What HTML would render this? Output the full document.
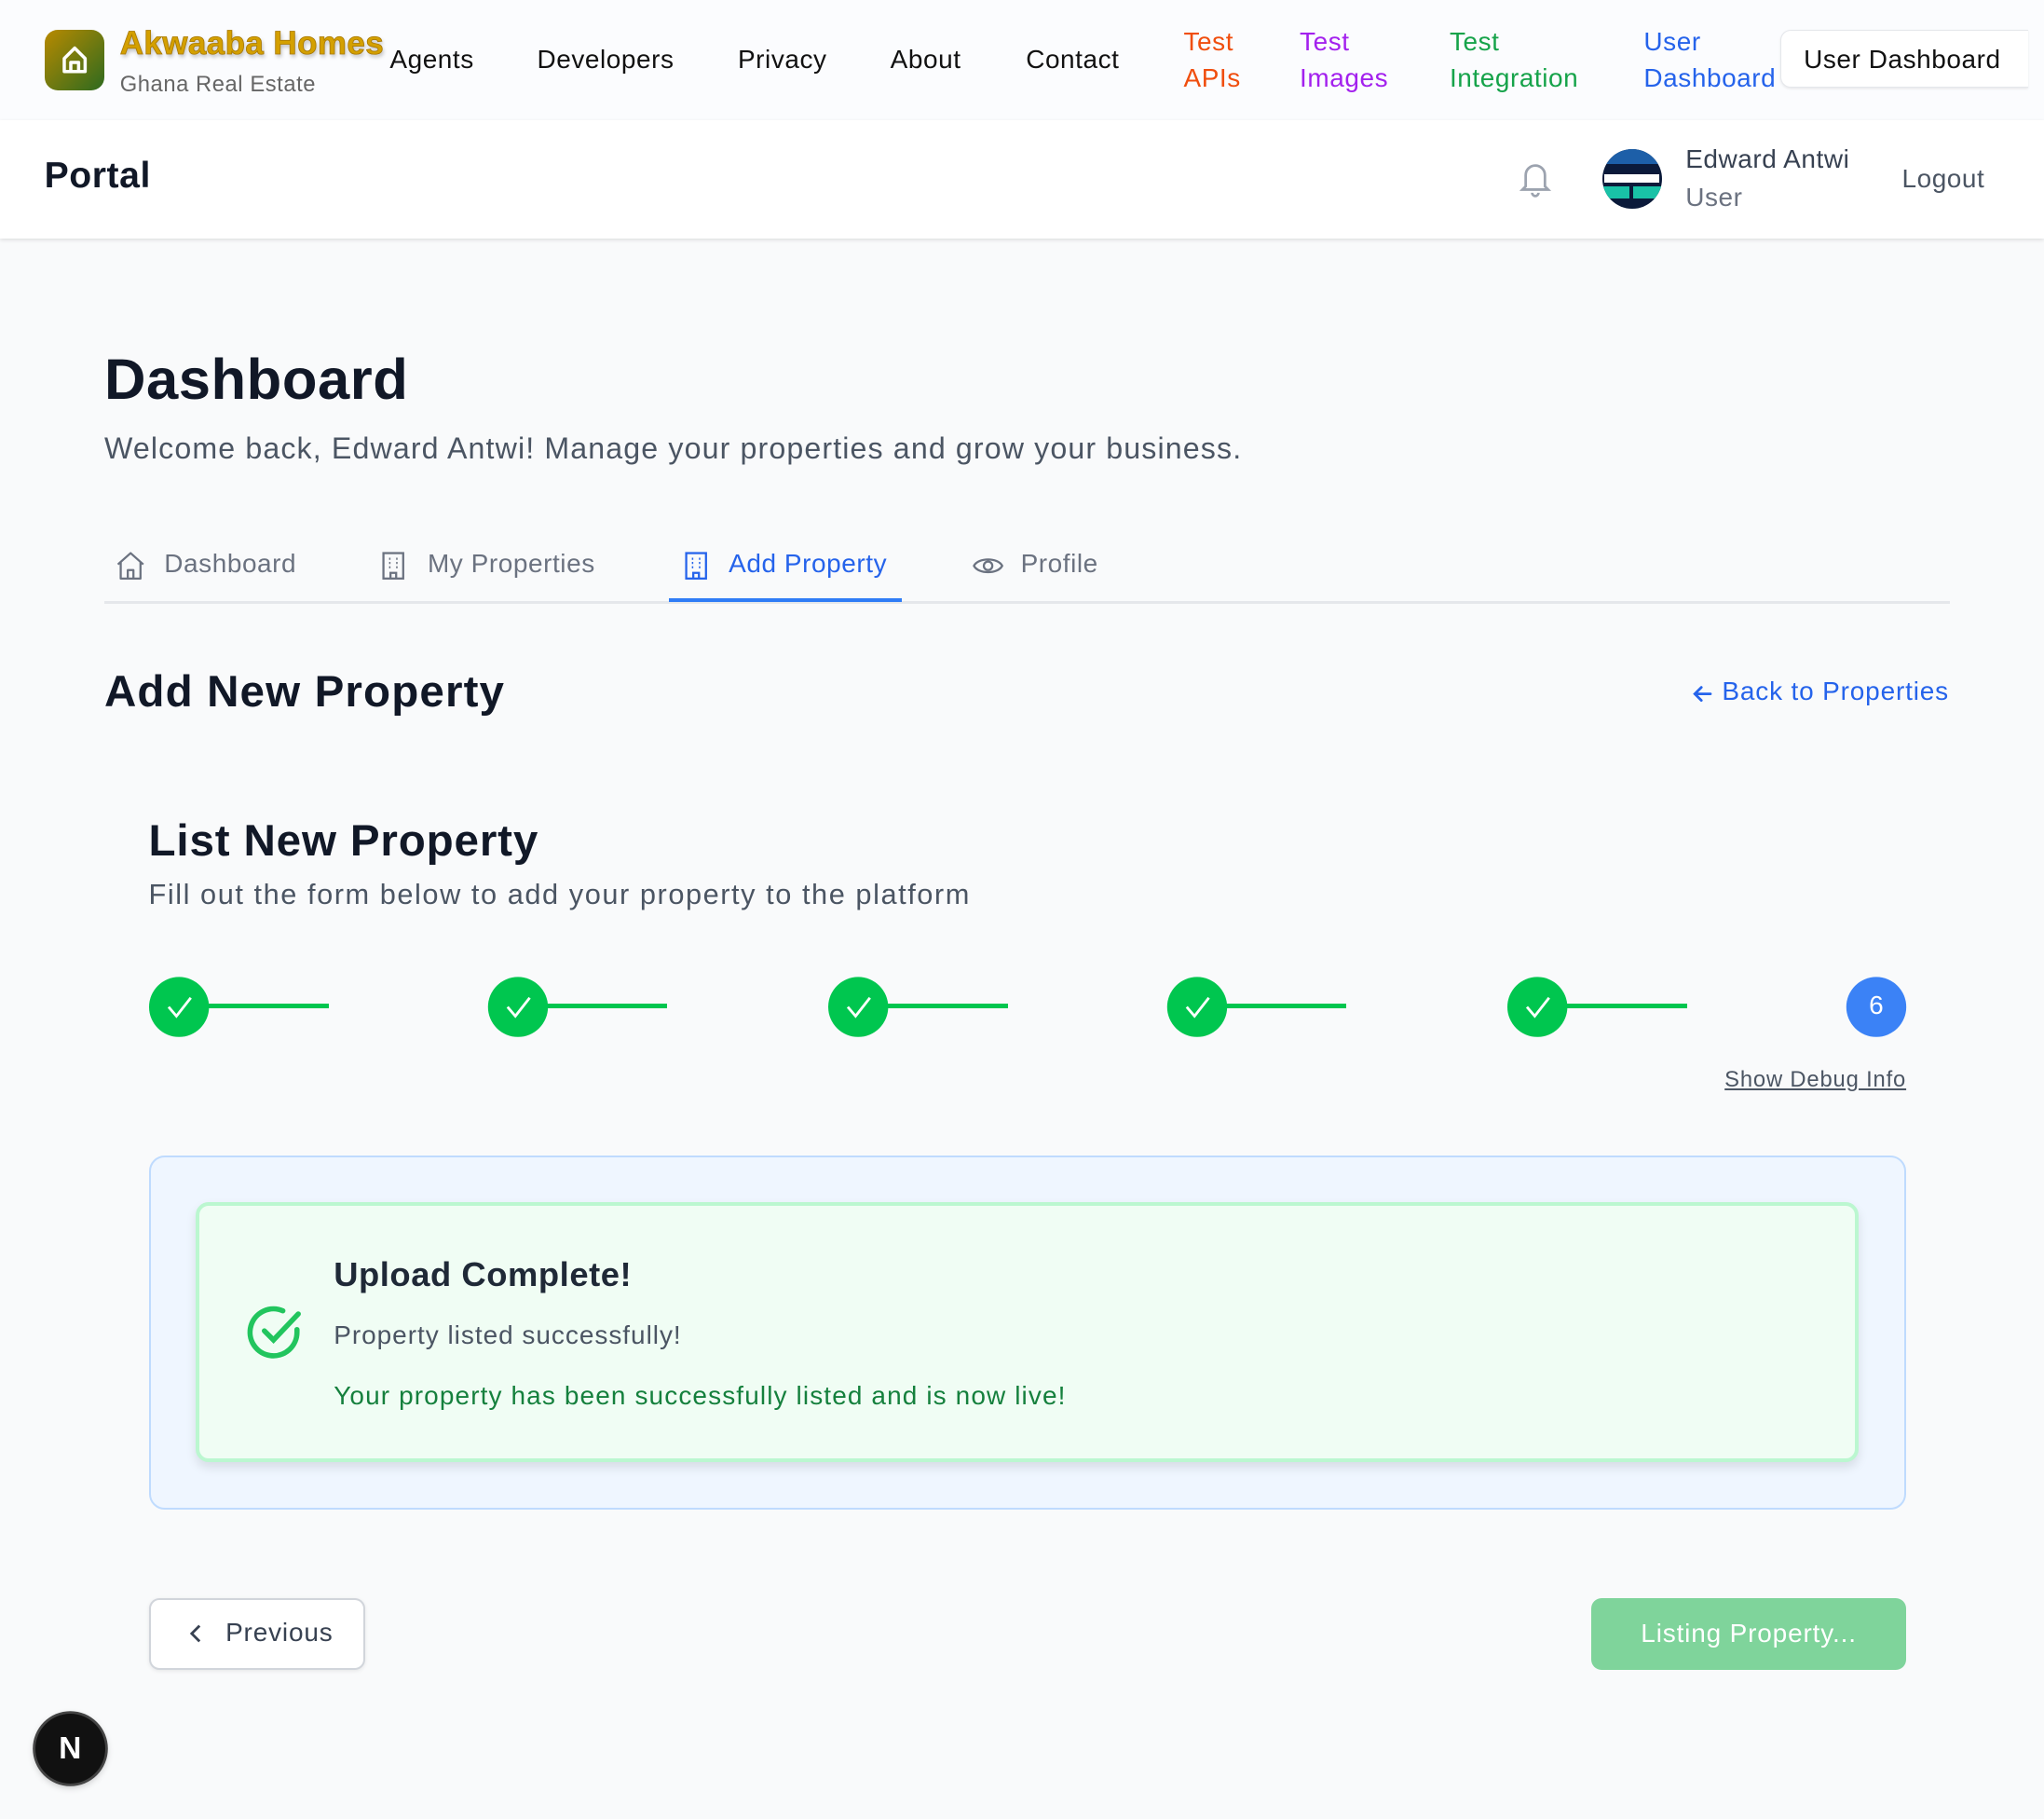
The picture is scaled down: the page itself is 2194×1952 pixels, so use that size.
<!DOCTYPE html>
<html><head><meta charset="utf-8"><style>
html,body{margin:0;padding:0}
body{width:1568px;height:1395px;zoom:1.39923;background:#f9fafb;font-family:"Liberation Sans",Arial,sans-serif;position:relative;overflow:hidden;color:#111827;letter-spacing:0.4px}
.a{position:absolute;white-space:nowrap}
.top{position:absolute;left:0;top:0;width:1568px;height:92px;background:#fbfcfe}
.bar{position:absolute;left:0;top:92px;width:1568px;height:91px;background:#fff;box-shadow:0 1px 3px rgba(0,0,0,.12)}
.nav{font-size:20px;color:#111}
.two{font-size:20px;line-height:28px}
</style></head><body>
<div class="top"></div>
<div class="bar"></div>
<div class="a" style="left:34px;top:23px;width:46px;height:46px;border-radius:10px;background:linear-gradient(135deg,#b88a00,#2d6a1f)">
<svg width="46" height="46" viewBox="0 0 46 46" fill="none" stroke="#fff" stroke-width="2.5" stroke-linejoin="round"><path d="M15 22 L23 14 L31 22 V32 H15 Z"/><path d="M20 32 V25 H26 V32"/></svg></div>
<div class="a" style="left:92px;top:19px;font-size:25px;font-weight:bold;color:#d4a000;letter-spacing:0.3px;text-shadow:1px 2px 3px rgba(0,0,0,.25);-webkit-text-stroke:0.6px #a87800">Akwaaba Homes</div>
<div class="a" style="left:92px;top:55px;font-size:17px;color:#666">Ghana Real Estate</div>
<div class="a nav" style="left:299px;top:34px">Agents</div>
<div class="a nav" style="left:412px;top:34px">Developers</div>
<div class="a nav" style="left:566px;top:34px">Privacy</div>
<div class="a nav" style="left:683px;top:34px">About</div>
<div class="a nav" style="left:787px;top:34px">Contact</div>
<div class="a two" style="left:908px;top:18px;color:#f04e0e">Test<br>APIs</div>
<div class="a two" style="left:997px;top:18px;color:#a321ee">Test<br>Images</div>
<div class="a two" style="left:1112px;top:18px;color:#16a34a">Test<br>Integration</div>
<div class="a two" style="left:1261px;top:18px;color:#2563eb">User<br>Dashboard</div>
<div class="a" style="left:1366px;top:23px;width:190px;height:44px;border:1px solid #e5e7eb;border-right:none;border-radius:8px 0 0 8px;background:#fff;box-shadow:0 1px 2px rgba(0,0,0,.08);font-size:20px;line-height:44px;padding-left:17px;box-sizing:border-box;color:#111">User Dashboard</div>
<div class="a" style="left:34px;top:119px;font-size:28px;font-weight:bold">Portal</div>
<svg class="a" style="left:1163px;top:121px" width="30" height="32" viewBox="0 0 24 26" fill="none" stroke="#9ca3af" stroke-width="1.6"><path d="M6 18 V11 a6 6 0 0 1 12 0 V18 L20 20 H4 Z"/><path d="M10 22 a2 2 0 0 0 4 0"/></svg>
<div class="a" style="left:1229px;top:114px;width:46px;height:46px;border-radius:50%;overflow:hidden;background:#0b1a3a">
<div style="position:absolute;left:0;top:0;width:46px;height:12px;background:#1d5fa8"></div>
<div style="position:absolute;left:2px;top:20px;width:42px;height:6px;background:#fff"></div>
<div style="position:absolute;left:1px;top:29px;width:20px;height:9px;background:#19c2a7"></div>
<div style="position:absolute;left:24px;top:29px;width:21px;height:9px;background:#19c2a7"></div></div>
<div class="a" style="left:1293px;top:111px;font-size:20px;color:#374151">Edward Antwi</div>
<div class="a" style="left:1293px;top:140px;font-size:20px;color:#6b7280">User</div>
<div class="a" style="left:1459px;top:126px;font-size:20px;color:#4b5563">Logout</div>

<div class="a" style="left:80px;top:266px;font-size:44px;font-weight:bold">Dashboard</div>
<div class="a" style="left:80px;top:331px;font-size:23px;color:#4b5563;letter-spacing:0.8px">Welcome back, Edward Antwi! Manage your properties and grow your business.</div>
<div class="a" style="left:80px;top:461px;width:1416px;height:2px;background:#e5e7eb"></div>
<div class="a" style="left:513px;top:459px;width:179px;height:3px;background:#2f7cf6"></div>
<svg class="a" style="left:87px;top:421px" width="26" height="26" viewBox="0 0 24 24" fill="none" stroke="#6b7280" stroke-width="1.5" stroke-linejoin="round"><path d="M3 11 L12 3 L21 11 M5 9.5 V21 H19 V9.5"/><path d="M10 21 V15 H14 V21"/></svg>
<div class="a" style="left:126px;top:421px;font-size:20px;color:#6b7280">Dashboard</div>
<svg class="a" style="left:289px;top:421px" width="26" height="26" viewBox="0 0 24 24" fill="none" stroke="#6b7280" stroke-width="1.5"><rect x="5" y="3" width="14" height="18"/><path d="M9 7h1M14 7h1M9 10h1M14 10h1M9 13h1M14 13h1M10 21v-4h4v4"/></svg>
<div class="a" style="left:328px;top:421px;font-size:20px;color:#6b7280">My Properties</div>
<svg class="a" style="left:521px;top:421px" width="26" height="26" viewBox="0 0 24 24" fill="none" stroke="#2563eb" stroke-width="1.5"><rect x="5" y="3" width="14" height="18"/><path d="M9 7h1M14 7h1M9 10h1M14 10h1M9 13h1M14 13h1M10 21v-4h4v4"/></svg>
<div class="a" style="left:559px;top:421px;font-size:20px;color:#2563eb">Add Property</div>
<svg class="a" style="left:744px;top:421px" width="28" height="26" viewBox="0 0 24 24" fill="none" stroke="#6b7280" stroke-width="1.5"><path d="M2 12 C5 6 19 6 22 12 C19 18 5 18 2 12Z"/><circle cx="12" cy="12" r="3"/></svg>
<div class="a" style="left:783px;top:421px;font-size:20px;color:#6b7280">Profile</div>

<div class="a" style="left:80px;top:511px;font-size:34px;font-weight:bold;letter-spacing:0.8px">Add New Property</div>
<svg class="a" style="left:1297px;top:523px" width="18" height="18" viewBox="0 0 18 18" fill="none" stroke="#2563eb" stroke-width="2" stroke-linecap="round"><path d="M15 9 H3 M8 4 L3 9 L8 14"/></svg>
<div class="a" style="left:1321px;top:519px;font-size:20px;color:#2563eb;letter-spacing:0.6px">Back to Properties</div>

<div class="a" style="left:114px;top:625px;font-size:34px;font-weight:bold;letter-spacing:0.6px">List New Property</div>
<div class="a" style="left:114px;top:673px;font-size:22px;color:#4b5563;letter-spacing:1.1px">Fill out the form below to add your property to the platform</div>

<div class="a" style="left:137px;top:770px;width:115px;height:3px;background:#00c64f"></div>
<div class="a" style="left:397px;top:770px;width:115px;height:3px;background:#00c64f"></div>
<div class="a" style="left:658px;top:770px;width:115px;height:3px;background:#00c64f"></div>
<div class="a" style="left:918px;top:770px;width:115px;height:3px;background:#00c64f"></div>
<div class="a" style="left:1179px;top:770px;width:115px;height:3px;background:#00c64f"></div>
<svg class="a" style="left:114px;top:748px" width="1350" height="48">
<g fill="#00c64f"><circle cx="23" cy="24" r="23"/><circle cx="283" cy="24" r="23"/><circle cx="544" cy="24" r="23"/><circle cx="804" cy="24" r="23"/><circle cx="1065" cy="24" r="23"/></g>
<g fill="none" stroke="#fff" stroke-width="2"><path d="M15 24 l6 7 l11 -14"/><path d="M275 24 l6 7 l11 -14"/><path d="M536 24 l6 7 l11 -14"/><path d="M796 24 l6 7 l11 -14"/><path d="M1057 24 l6 7 l11 -14"/></g>
<circle cx="1325" cy="24" r="23" fill="#3b82f6"/></svg>
<div class="a" style="left:1416px;top:760px;width:47px;text-align:center;font-size:20px;color:#fff">6</div>
<div class="a" style="left:1323px;top:818px;font-size:17px;color:#4b5563;text-decoration:underline;letter-spacing:0.6px">Show Debug Info</div>

<div class="a" style="left:114px;top:886px;width:1348px;height:272px;box-sizing:border-box;border:2px solid #bfdbfe;border-radius:12px;background:#eff6ff"></div>
<div class="a" style="left:150px;top:922px;width:1276px;height:199px;box-sizing:border-box;border:3px solid #bbf7d0;border-radius:10px;background:#f0fdf4;box-shadow:0 4px 8px rgba(0,0,0,.1)"></div>
<svg class="a" style="left:186px;top:998px" width="48" height="48" viewBox="0 0 24 24" fill="none" stroke="#22c55e" stroke-width="2" stroke-linecap="round"><path d="M21 11 V12 A9 9 0 1 1 15.6 3.8"/><path d="M8.5 11.5 L12 15 L21.5 5"/></svg>
<div class="a" style="left:256px;top:963px;font-size:26px;font-weight:bold;color:#1f2937">Upload Complete!</div>
<div class="a" style="left:256px;top:1013px;font-size:20px;color:#4b5563;letter-spacing:0.7px">Property listed successfully!</div>
<div class="a" style="left:256px;top:1059px;font-size:20px;color:#15803d;letter-spacing:0.8px">Your property has been successfully listed and is now live!</div>

<div class="a" style="left:114px;top:1226px;width:166px;height:55px;box-sizing:border-box;border:2px solid #d1d5db;border-radius:8px;background:#fff;box-shadow:0 1px 3px rgba(0,0,0,.08)"></div>
<svg class="a" style="left:140px;top:1243px" width="20" height="20" viewBox="0 0 20 20" fill="none" stroke="#374151" stroke-width="2"><path d="M13 4 L7 10 L13 16"/></svg>
<div class="a" style="left:173px;top:1241px;font-size:20px;color:#374151;letter-spacing:0.6px">Previous</div>
<div class="a" style="left:1221px;top:1226px;width:241px;height:55px;border-radius:8px;background:#7fd49b;color:#fff;font-size:20px;line-height:55px;text-align:center;letter-spacing:0.6px">Listing Property...</div>

<div class="a" style="left:27px;top:1314px;width:54px;height:54px;border-radius:50%;background:#111;box-shadow:0 0 0 2px #444, 0 2px 6px rgba(0,0,0,.3);color:#fff;font-size:24px;line-height:54px;text-align:center;font-weight:bold">N</div>
</body></html>
